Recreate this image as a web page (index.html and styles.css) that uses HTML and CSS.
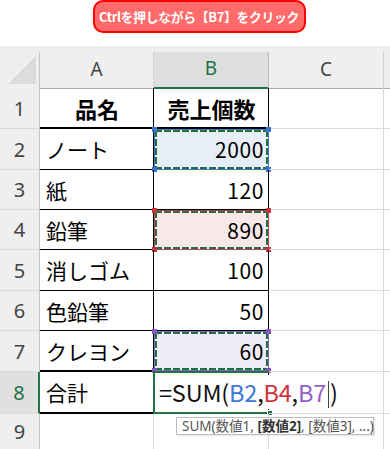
FILE: index.html
```html
<!DOCTYPE html>
<html lang="ja">
<head>
<meta charset="utf-8">
<link rel="stylesheet" href="styles.css">
</head>
<body>
<div class="top">
  <div class="banner">Ctrlを押しながら【B7】をクリック</div>
</div>
<div class="sheet">
  <div class="row hdr">
    <div class="corner">
      <svg width="39" height="36" viewBox="0 0 39 36"><polygon points="36,4 36,32 8,32" fill="#dcdcdc"/></svg>
    </div>
    <div class="ch">A</div>
    <div class="ch sel">B</div>
    <div class="ch">C</div>
    <div class="ch last"></div>
  </div>

  <div class="row r41">
    <div class="rh">1</div>
    <div class="c t thick head">品名</div>
    <div class="c t thick head">売上個数</div>
    <div class="c"></div><div class="c last"></div>
  </div>
  <div class="row r41">
    <div class="rh">2</div>
    <div class="c t">ノート</div>
    <div class="c t num fill-blue">2000
      <div class="ref blue"><div class="ants"></div><span class="h tl"></span><span class="h tr"></span><span class="h bl"></span><span class="h br"></span></div>
    </div>
    <div class="c"></div><div class="c last"></div>
  </div>
  <div class="row r40">
    <div class="rh">3</div>
    <div class="c t">紙</div>
    <div class="c t num">120</div>
    <div class="c"></div><div class="c last"></div>
  </div>
  <div class="row r40">
    <div class="rh">4</div>
    <div class="c t">鉛筆</div>
    <div class="c t num fill-red">890
      <div class="ref red"><div class="ants"></div><span class="h tl"></span><span class="h tr"></span><span class="h bl"></span><span class="h br"></span></div>
    </div>
    <div class="c"></div><div class="c last"></div>
  </div>
  <div class="row r41">
    <div class="rh">5</div>
    <div class="c t">消しゴム</div>
    <div class="c t num">100</div>
    <div class="c"></div><div class="c last"></div>
  </div>
  <div class="row r40">
    <div class="rh">6</div>
    <div class="c t">色鉛筆</div>
    <div class="c t num">50</div>
    <div class="c"></div><div class="c last"></div>
  </div>
  <div class="row r41">
    <div class="rh">7</div>
    <div class="c t thick">クレヨン</div>
    <div class="c t thick num fill-purple">60
      <div class="ref purple"><div class="ants"></div><span class="h tl"></span><span class="h tr"></span><span class="h bl"></span><span class="h br"></span></div>
    </div>
    <div class="c"></div><div class="c last"></div>
  </div>
  <div class="row r42">
    <div class="rh sel">8</div>
    <div class="c t thick">合計</div>
    <div class="c t thick edit">
      <div class="active"><span class="handle"></span></div>
      <span class="formula">=SUM(<span class="f-blue">B2</span>,<span class="f-red">B4</span>,<span class="f-purple">B7</span><span class="caret"></span>)</span>
      <div class="tip">SUM(数値1, <b>[数値2]</b>, [数値3], ...)</div>
    </div>
    <div class="c clear"></div><div class="c last"></div>
  </div>
  <div class="row r9">
    <div class="rh">9</div>
    <div class="c"></div>
    <div class="c"></div>
    <div class="c"></div><div class="c last"></div>
  </div>
</div>
</body>
</html>
```

FILE: styles.css
```css
* { box-sizing: border-box; }
html, body { margin: 0; padding: 0; background: #fff; }
body {
  width: 390px;
  height: 449px;
  overflow: hidden;
  font-family: "Noto Sans CJK JP", "Noto Sans", sans-serif;
}

.top {
  height: 46px;
  display: flex;
  justify-content: center;
  align-items: flex-start;
}
.banner {
  margin-left: 8px;
  width: 213px;
  height: 33px;
  background: #ff6a6a;
  border: 2px solid #ff0000;
  border-radius: 10px;
  color: #fff;
  font-weight: 700;
  font-size: 12.8px;
  display: flex;
  align-items: center;
  justify-content: center;
  letter-spacing: -0.3px;
}

.sheet { position: relative; }
.row {
  display: grid;
  grid-template-columns: 40px 114px 115px 115px 1fr;
}
.r41 { height: 41px; }
.r40 { height: 40px; }
.r42 { height: 42px; }
.r9 { height: 36px; }

.hdr {
  height: 42px;
  background: #efefef;
  padding-top: 6px;
}
.corner {
  border-right: 1px solid #c4c4c4;
  border-bottom: 1px solid #ababab;
  display: flex;
}
.ch {
  border-right: 1px solid #d0d0d0;
  border-bottom: 1px solid #ababab;
  display: flex;
  align-items: center;
  justify-content: center;
  font-family: "Noto Sans", sans-serif;
  font-size: 19px;
  color: #444;
  padding-bottom: 3px;
}
.ch.sel {
  background: #dedede;
  color: #217346;
  border-bottom: 2px solid #217346;
  border-right-color: #bdbdbd;
}
.ch.last { border-right: none; }

.rh {
  background: #efefef;
  border-right: 1px solid #c4c4c4;
  border-bottom: 1px solid #dadada;
  display: flex;
  align-items: center;
  justify-content: center;
  font-family: "Noto Sans", sans-serif;
  font-size: 20px;
  color: #444;
}
.rh.sel {
  background: #e0e0e0;
  color: #217346;
  border-right: 2px solid #217346;
}

.c {
  position: relative;
  border-right: 1px solid #dadada;
  border-bottom: 1px solid #dadada;
  display: flex;
  align-items: center;
  padding: 0 5px 0 6px;
  font-size: 21px;
  color: #000;
  white-space: nowrap;
}
.c.last { border-right: none; }
.c.t {
  border-right: 1px solid #000;
  border-bottom: 1px solid #000;
}
.c.thick { border-bottom: 2px solid #000; }
.c.head { justify-content: center; font-weight: 700; font-size: 22px; }
.c.num { justify-content: flex-end; padding-right: 4px; letter-spacing: 0.6px; }

.fill-blue { background: #e8eef8; }
.fill-red { background: #f9e8e8; }
.fill-purple { background: #efebf5; }

.ref {
  position: absolute;
  top: 0; left: 0; right: -1px; bottom: -1px;
  border: 1px solid;
}
.ref.blue { border-color: #4a7bd0; --hc: #3d72cc; }
.ref.red { border-color: #c9444c; --hc: #c9343c; }
.ref.purple { border-color: #8a62c0; --hc: #8555c0; }
.ants {
  position: absolute;
  inset: 0;
  background-image:
    repeating-linear-gradient(90deg, #1f6e43 0 7px, #fff 7px 9px),
    repeating-linear-gradient(90deg, #1f6e43 0 7px, #fff 7px 9px),
    repeating-linear-gradient(180deg, #1f6e43 0 7px, #fff 7px 9px),
    repeating-linear-gradient(180deg, #1f6e43 0 7px, #fff 7px 9px);
  background-size: 100% 2px, 100% 2px, 2px 100%, 2px 100%;
  background-position: 0 0, 0 100%, 0 0, 100% 0;
  background-repeat: no-repeat;
}
.h {
  position: absolute;
  width: 5px; height: 5px;
  background: var(--hc);
}
.h.tl { left: -3px; top: -3px; }
.h.tr { right: -3px; top: -3px; }
.h.bl { left: -3px; bottom: -3px; }
.h.br { right: -3px; bottom: -3px; }

.edit { overflow: visible; padding-left: 5px; }
.formula {
  position: relative;
  z-index: 2;
  font-size: 23.5px;
  color: #111;
  letter-spacing: -0.2px;
  background: #fff;
}
.f-blue { color: #3c78d8; }
.f-red { color: #d0343c; }
.f-purple { color: #9060c8; }
.caret {
  display: inline-block;
  width: 0;
  height: 27px;
  border-left: 1px solid #444;
  vertical-align: -6px;
  margin: 0 1px 0 2px;
}
.active {
  position: absolute;
  top: -1px; left: -1px; right: -1px; bottom: -2px;
  border: 2px solid #217346;
  border-right: none;
}
.handle {
  position: absolute;
  right: -4px; bottom: -4px;
  width: 6px; height: 6px;
  background: #217346;
  border: 1px solid #fff;
}
.tip {
  position: absolute;
  left: 22px;
  top: 45px;
  width: 198px;
  height: 18px;
  background: #fff;
  border: 1px solid #bdbdbd;
  box-shadow: 1px 1px 1px rgba(0,0,0,0.08);
  font-family: "Noto Sans", "Noto Sans CJK JP", sans-serif;
  font-size: 13.5px;
  color: #555;
  padding: 0 0 0 5px;
  line-height: 16px;
  z-index: 3;
  letter-spacing: 0;
}
.tip b { color: #333; }
.clear { background: transparent; }
```
